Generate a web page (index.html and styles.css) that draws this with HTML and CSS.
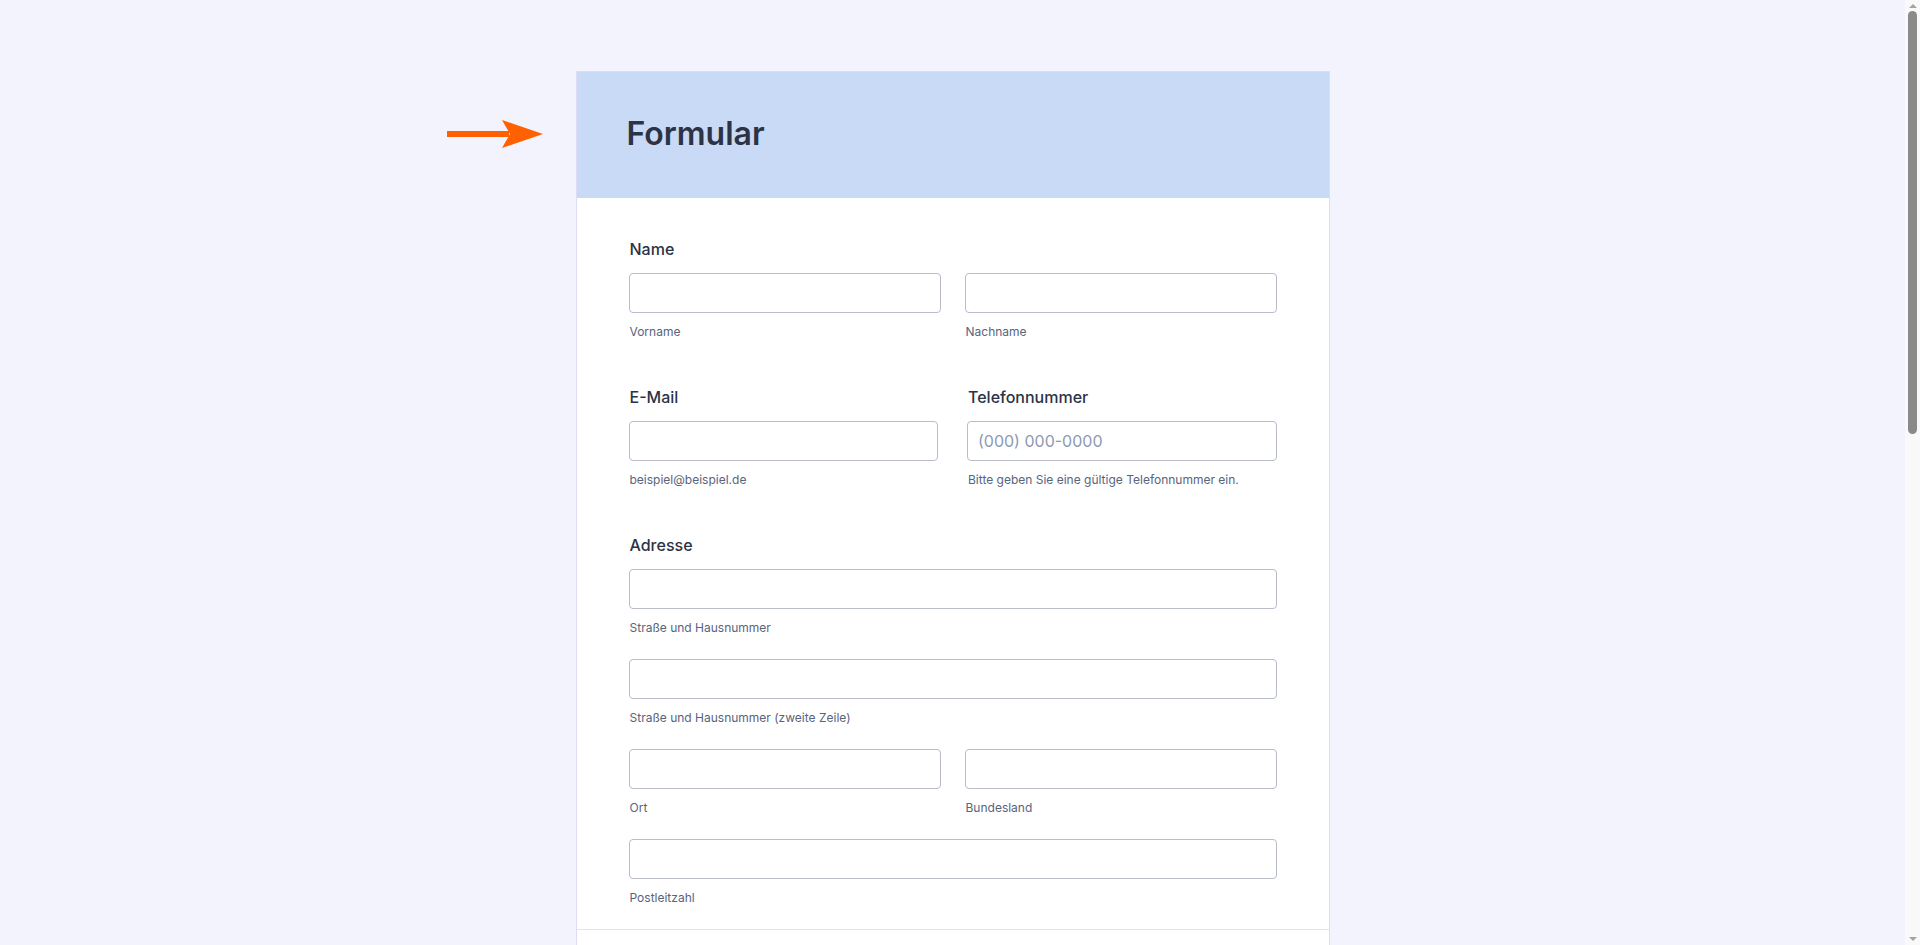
FILE: index.html
```html
<!DOCTYPE html>
<html lang="de">
<head>
<meta charset="utf-8">
<title>Formular</title>
<link rel="stylesheet" href="styles.css">
</head>
<body>
<div class="page">
  <div class="card">
    <svg class="pointer" width="97" height="28" viewBox="0 0 97 28" aria-hidden="true">
      <rect x="0" y="11" width="62" height="6" fill="#ff6100"/>
      <polygon points="55,0 96,14 55,28 63,14" fill="#ff6100"/>
    </svg>
    <header class="card-header">
      <h1 class="title">Formular</h1>
    </header>
    <form class="form-body">
      <div class="field">
        <label class="label">Name</label>
        <div class="pair pair-tight">
          <div class="sub">
            <input class="input" type="text">
            <span class="sublabel">Vorname</span>
          </div>
          <div class="sub">
            <input class="input" type="text">
            <span class="sublabel">Nachname</span>
          </div>
        </div>
      </div>

      <div class="pair pair-wide">
        <div class="field">
          <label class="label">E-Mail</label>
          <div class="sub">
            <input class="input" type="email">
            <span class="sublabel">beispiel@beispiel.de</span>
          </div>
        </div>
        <div class="field">
          <label class="label">Telefonnummer</label>
          <div class="sub">
            <input class="input" type="tel" placeholder="(000) 000-0000">
            <span class="sublabel">Bitte geben Sie eine gültige Telefonnummer ein.</span>
          </div>
        </div>
      </div>

      <div class="field">
        <label class="label">Adresse</label>
        <div class="stack">
          <div class="sub">
            <input class="input" type="text">
            <span class="sublabel">Straße und Hausnummer</span>
          </div>
          <div class="sub">
            <input class="input" type="text">
            <span class="sublabel">Straße und Hausnummer (zweite Zeile)</span>
          </div>
          <div class="pair pair-tight">
            <div class="sub">
              <input class="input" type="text">
              <span class="sublabel">Ort</span>
            </div>
            <div class="sub">
              <input class="input" type="text">
              <span class="sublabel">Bundesland</span>
            </div>
          </div>
          <div class="sub">
            <input class="input" type="text">
            <span class="sublabel">Postleitzahl</span>
          </div>
        </div>
      </div>
    </form>
    <div class="card-footer"></div>
  </div>
</div>
<div class="scrollbar" aria-hidden="true">
  <span class="sb-arrow sb-up"></span>
  <span class="sb-thumb"></span>
  <span class="sb-arrow sb-down"></span>
</div>
</body>
</html>
```

FILE: styles.css
```css
html, body {
  margin: 0;
  padding: 0;
}

body {
  background: #f3f3fe;
  font-family: Inter, "Noto Sans", "Liberation Sans", sans-serif;
  color: #2c3345;
}

.page {
  padding: 72px 15px 72px 0;
  display: flex;
  justify-content: center;
}

.card {
  position: relative;
  width: 752px;
  background: #ffffff;
  box-shadow: 0 0 0 1px rgba(200, 202, 232, 0.55);
}

.pointer {
  position: absolute;
  left: -130px;
  top: 48px;
}

.card-header {
  background: #c9daf6;
  padding: 42px 50px 44px;
}

.title {
  margin: 0;
  font-size: 32px;
  line-height: 40px;
  font-weight: 600;
  color: #2c3345;
}

.form-body {
  padding: 17px 52px 0;
  border-bottom: 1px solid #e3e5ec;
}

.field {
  padding: 24px 0 23px;
}

.label {
  display: block;
  padding-left: 1px;
  font-size: 16px;
  line-height: 20px;
  font-weight: 500;
  color: #2c3345;
  margin-bottom: 14px;
}

.pair {
  display: grid;
  grid-template-columns: 1fr 1fr;
}

.pair-tight {
  column-gap: 24px;
}

.pair-wide {
  column-gap: 29px;
}

.stack {
  display: flex;
  flex-direction: column;
  row-gap: 23px;
}

.sub {
  display: flex;
  flex-direction: column;
}

.input {
  box-sizing: border-box;
  width: 100%;
  height: 40px;
  margin: 0;
  padding: 0 10px;
  border: 1px solid #b8bdc9;
  border-radius: 4px;
  background: #ffffff;
  font-family: Inter, "Noto Sans", "Liberation Sans", sans-serif;
  font-size: 16px;
  color: #2c3345;
  outline: none;
}

.input::placeholder {
  color: #8d99b3;
}

.sublabel {
  margin-top: 11px;
  padding-left: 1px;
  font-size: 12px;
  line-height: 16px;
  color: #57647e;
}

.card-footer {
  height: 972px;
}

/* classic browser scrollbar look */
.scrollbar {
  position: fixed;
  top: 0;
  right: 0;
  width: 15px;
  height: 100vh;
  background: #f9f9f9;
  box-sizing: border-box;
  display: flex;
  flex-direction: column;
  align-items: center;
}

.sb-arrow {
  width: 0;
  height: 0;
  border-left: 4px solid transparent;
  border-right: 4px solid transparent;
}

.sb-up {
  margin-top: 4px;
  border-bottom: 4px solid #a3a3a3;
}

.sb-thumb {
  margin-top: 3px;
  width: 9px;
  height: 423px;
  border-radius: 5px;
  background: #8a8a8a;
}

.sb-down {
  margin-top: auto;
  margin-bottom: 4px;
  border-top: 4px solid #a3a3a3;
}
```
